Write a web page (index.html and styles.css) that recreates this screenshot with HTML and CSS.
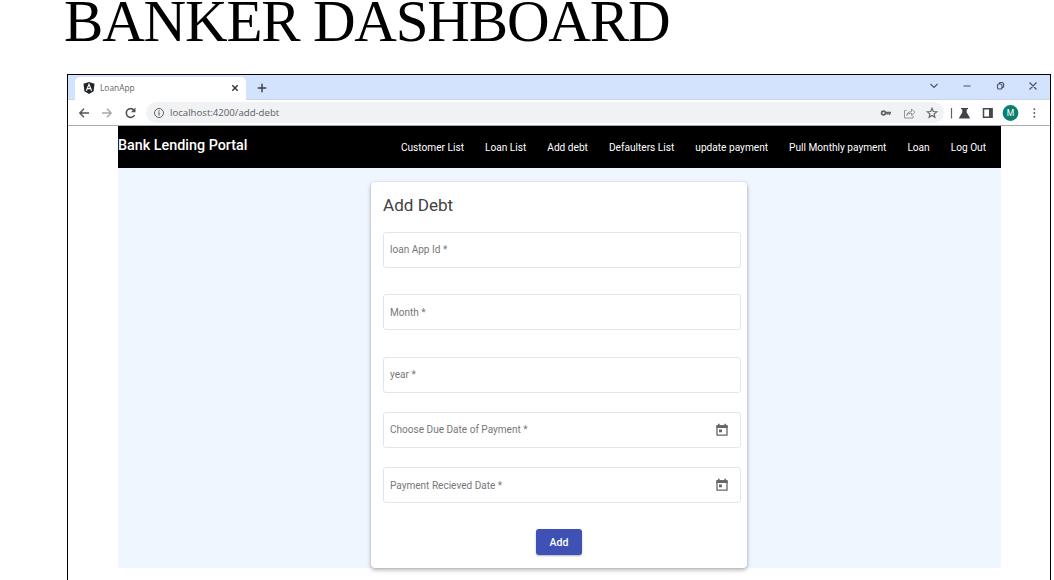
FILE: index.html
```html
<!DOCTYPE html>
<html lang="en">
<head>
<meta charset="utf-8">
<title>Banker Dashboard</title>
<link rel="stylesheet" href="styles.css">
</head>
<body>
<h1 class="slide-title">BANKER DASHBOARD</h1>
<div class="window">
  <div class="tabstrip">
    <div class="tab">
      <svg class="favicon" viewBox="0 0 12 13"><path d="M6 0 12 2 11 10 6 13 1 10 0 2Z" fill="#22252a"/><path d="M3.2 9.5 6 2.5 8.8 9.5M4.3 7.2H7.7" fill="none" stroke="#fff" stroke-width="1.2"/></svg>
      <span class="tab-name">LoanApp</span>
      <svg class="tab-close" viewBox="0 0 8 8"><path d="M1.3 1.3 6.7 6.7M6.7 1.3 1.3 6.7" fill="none" stroke="#333" stroke-width="1.4"/></svg>
    </div>
    <svg class="new-tab" viewBox="0 0 10 10"><path d="M5 .7V9.3M.7 5H9.3" stroke="#3c4043" stroke-width="1.5"/></svg>
    <svg class="controls" viewBox="0 0 110 12"><g fill="none" stroke="#4a5060" stroke-width="1.1"><path d="M2.500 4 6 7.500 9.500 4M35.500 6H42.500M69.500 5.300q0-1.300 1.300-1.300H72.700q1.300 0 1.300 1.300V7.700q0 1.300-1.300 1.300H70.800q-1.300 0-1.300-1.300ZM71 3.500Q71.300 2.500 72.500 2.500H73.700Q75.700 2.500 75.700 4.500V6Q75.700 7.400 74.500 7.600M101.500 2.500 108.500 9.500M108.500 2.500 101.500 9.500"/></g></svg>
  </div>
  <div class="toolbar">
    <svg class="history" viewBox="0 0 60 14"><g fill="none" stroke-width="1.4"><path d="M11 7H2M6 2.700 1.800 7 6 11.300" stroke="#505358"/><path d="M24 7H33M29 2.700 33.200 7 29 11.300" stroke="#a6a8ab"/><path d="M56 4.100A4.400 4.400 0 1 0 56.600 9" stroke="#505358" stroke-width="1.600"/></g><path d="M57.500 1.500V6.200H52.800Z" fill="#505358"/></svg>
    <div class="address">
      <svg class="info" viewBox="0 0 12 12"><circle cx="6" cy="6" r="4.500" fill="none" stroke="#5f6368" stroke-width="1"/><path d="M6 5.300V8.600M6 3.200V4.400" stroke="#5f6368" stroke-width="1.200"/></svg>
      <span class="url">localhost:4200/add-debt</span>
      <svg class="address-icons" viewBox="0 0 58 14"><g fill="none" stroke="#5f6368"><circle cx="3.500" cy="7" r="1.900" stroke-width="1.700"/><path d="M5.500 6.700H11M9.500 7V9M7.300 7V8.500" stroke-width="1.700"/><path d="M26.500 4.500H24.500V12H33V9.500M26.500 9.500Q27 5.500 31.500 5.500V3L35 6.300 31.500 9.300V7.200Q28.500 7 26.500 9.500Z" stroke="#898c90" stroke-width=".9"/><path d="M52 2.300 53.300 5.500 56.700 5.800 54.100 8 54.900 11.300 52 9.500 49.100 11.300 49.900 8 47.300 5.800 50.700 5.500Z" stroke-width="1.100"/></g></svg>
    </div>
    <svg class="extensions" viewBox="0 0 92 18"><path d="M2.500 4V14.500" stroke="#5f6368" stroke-width="1.200"/><path d="M12 4H19V5.200H17.700V8.500L20.800 13.500V14.500H10.200V13.500L13.300 8.500V5.200H12Z" fill="#3f4246"/><path d="M34.500 4.800H43V13.300H34.500Z" fill="none" stroke="#45484c" stroke-width="1.500"/><path d="M40 4.500H43.500V13.500H40Z" fill="#45484c"/><g fill="#5f6368"><circle cx="85.300" cy="5.300" r="1"/><circle cx="85.300" cy="9" r="1"/><circle cx="85.300" cy="12.700" r="1"/></g><circle cx="61.500" cy="9" r="7.900" fill="#0b8070"/><text class="avatar-letter" x="61.500" y="12" text-anchor="middle">M</text></svg>
  </div>
  <div class="page">
    <div class="navbar">
      <span class="brand">Bank Lending Portal</span>
      <nav class="links"><a>Customer List</a><a>Loan List</a><a>Add debt</a><a>Defaulters List</a><a>update payment</a><a>Pull Monthly payment</a><a>Loan</a><a>Log Out</a></nav>
    </div>
    <main class="content">
      <form class="card">
        <h2 class="card-title">Add Debt</h2>
        <div class="field wide-gap">loan App Id *</div>
        <div class="field wide-gap">Month *</div>
        <div class="field">year *</div>
        <div class="field date">Choose Due Date of Payment *<svg class="calendar" viewBox="0 0 12 14"><path d="M1 3H11V12.200H1Z" fill="none" stroke="#666" stroke-width="1.300" stroke-linejoin="round"/><path d="M.4 2.300H11.600V5H.4ZM2 .8H3.600V3H2ZM8.400.8H10V3H8.400ZM3 6.500H6V9.300H3Z" fill="#666"/></svg></div>
        <div class="field date">Payment Recieved Date *<svg class="calendar" viewBox="0 0 12 14"><path d="M1 3H11V12.200H1Z" fill="none" stroke="#666" stroke-width="1.300" stroke-linejoin="round"/><path d="M.4 2.300H11.600V5H.4ZM2 .8H3.600V3H2ZM8.400.8H10V3H8.400ZM3 6.500H6V9.300H3Z" fill="#666"/></svg></div>
        <button class="submit" type="button">Add</button>
      </form>
    </main>
  </div>
</div>
</body>
</html>
```
FILE: styles.css
```css
* { box-sizing: border-box; }
body { margin: 0; height: 580px; overflow: hidden; background: #fff; font-family: Roboto, sans-serif; }
svg { display: block; flex: none; }
.slide-title { margin: 0; height: 74px; padding-left: 64px; font: 400 59px/43px "Liberation Serif", serif; letter-spacing: -1.2px; color: #000; white-space: nowrap; }
.window { width: 984px; height: 520px; margin-left: 67px; border: 1px solid #000; border-width: 1px 1px 0; background: #fff; }
.tabstrip { display: flex; height: 25px; padding: 2px 10px 0 7px; background: #d3e2fd; border-bottom: 1px solid #c9d6e8; }
.tab { display: flex; align-items: center; width: 171px; height: 23px; padding: 0 7px 1px 8px; background: #fff; border-radius: 5px 5px 0 0; }
.favicon { width: 12px; height: 12px; }
.tab-name { margin-left: 5px; font: 8.4px/12px "Open Sans", sans-serif; color: #62666b; }
.tab-close { width: 8px; height: 8px; margin-left: auto; }
.new-tab { width: 10px; height: 10px; margin: 6px 0 0 11px; }
.controls { width: 110px; height: 12px; margin: 3px 2px 0 auto; }
.toolbar { display: flex; align-items: center; height: 26px; padding-left: 10px; border-bottom: 1px solid #a9abad; }
.history { width: 60px; height: 14px; }
.address { display: flex; align-items: center; width: 798px; height: 21px; margin-left: 8px; padding: 0 6px 0 7px; border-radius: 11px; background: #f1f2f3; }
.info { width: 12px; height: 12px; }
.url { margin-left: 5px; font: 9.65px/13px "Open Sans", sans-serif; color: #5c5f63; white-space: nowrap; }
.address-icons { width: 58px; height: 14px; margin-left: auto; }
.extensions { width: 92px; height: 18px; margin-left: 5px; }
.avatar-letter { font: 8.5px Roboto, sans-serif; fill: #fff; }
.page { width: 883px; margin-left: 50px; }
.navbar { display: flex; justify-content: space-between; height: 42px; padding: 0 15px 0 0; background: #000; color: #fff; }
.brand { padding-top: 10px; font-size: 14.35px; line-height: 20px; font-weight: 500; white-space: nowrap; }
.links { display: flex; gap: 21px; padding-top: 15px; font-size: 10.13px; line-height: 14px; white-space: nowrap; }
.content { height: 400px; padding-top: 14px; background: #eff6ff; }
.card { display: flex; flex-direction: column; width: 376px; height: 386px; margin-left: 253px; padding: 13px 6px 0 12px; border-radius: 4px; background: #fff; box-shadow: 0 2px 4px rgba(0,0,0,.3), 0 0 2px rgba(0,0,0,.12); }
.card-title { margin: 0 0 16.500px; font-size: 17.1px; line-height: 20px; font-weight: 400; color: #424242; }
.field { display: flex; align-items: center; flex: none; height: 36px; margin-bottom: 19.300px; padding: 0 12px 0 6px; border: 1px solid #e5e5e5; border-radius: 3px; color: #777; font-size: 10.05px; }
.field.wide-gap { margin-bottom: 26.500px; }
.calendar { width: 12px; height: 14px; margin-left: auto; }
.submit { align-self: center; width: 46px; height: 26px; margin: 7px 0 0 -6px; padding: 0; border: 0; border-radius: 3px; background: #3f51b5; color: #fff; font: 500 10.5px Roboto, sans-serif; box-shadow: 0 1px 2px rgba(0,0,0,.3); }
```
